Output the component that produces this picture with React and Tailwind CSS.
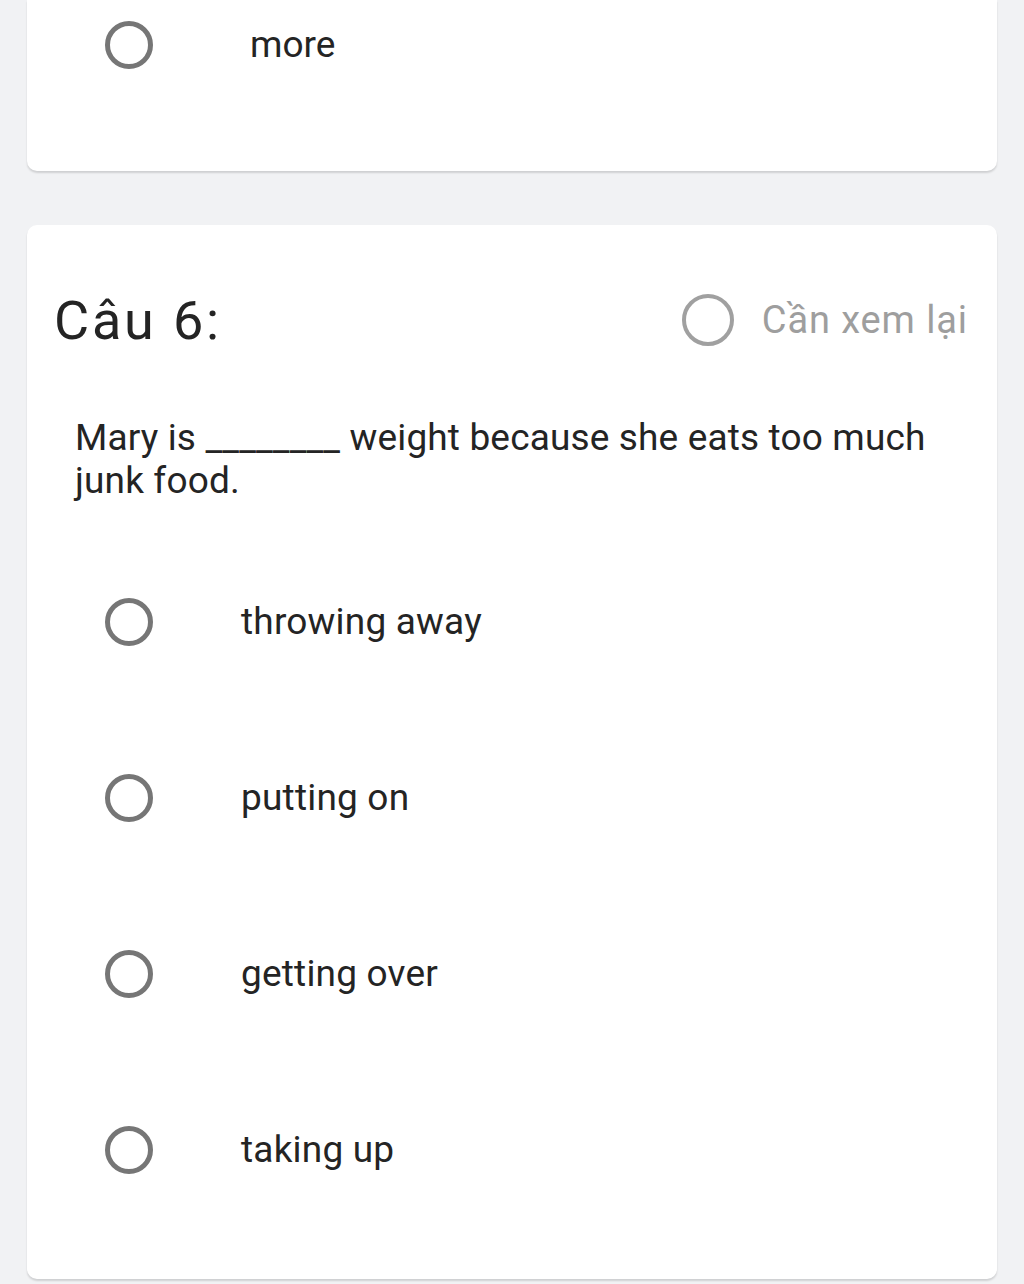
import React from "react";

function Radio({ className = "" }) {
  return (
    <div
      className={`shrink-0 rounded-full border-[5px] border-[#767676] w-[48px] h-[48px] ${className}`}
    />
  );
}

function Option({ label }) {
  return (
    <div className="flex items-center h-[176px] pl-[78px]">
      <Radio />
      <span className="ml-[88px] text-[37px] tracking-[0.2px] text-[#242424]">{label}</span>
    </div>
  );
}

export default function App() {
  return (
    <div
      className="min-h-[1284px] bg-[#f1f2f4] pb-[5px]"
      style={{ fontFamily: "Roboto, 'Noto Sans', sans-serif" }}
    >
      <div className="mx-[27px] h-[171px] bg-white rounded-b-[10px] shadow-[0_2px_2px_rgba(0,0,0,0.14)]">
        <div className="flex items-center h-[90px] pl-[78px]">
          <Radio />
          <span className="ml-[97px] text-[37px] text-[#242424]">more</span>
        </div>
      </div>

      <div className="mx-[27px] mt-[54px] h-[1054px] bg-white rounded-[10px] shadow-[0_2px_2px_rgba(0,0,0,0.14)] pt-[65px]">
        <div className="flex items-center justify-between h-[60px] pl-[27px] pr-[29px]">
          <span className="text-[54px] tracking-[2.8px] text-[#242424]">Câu 6:</span>
          <div className="flex items-center">
            <div className="w-[52px] h-[52px] rounded-full border-[4px] border-[#a0a0a0]" />
            <span className="ml-[28px] text-[38px] tracking-[0.9px] text-[#9e9e9e]">Cần xem lại</span>
          </div>
        </div>

        <p className="mt-[66px] pl-[48px] pr-[40px] text-[37px] leading-[43px] tracking-[0.15px] text-[#242424]">
          Mary is ________ weight because she eats too much junk food.
        </p>

        <div className="mt-[32px]">
          <Option label="throwing away" />
          <Option label="putting on" />
          <Option label="getting over" />
          <Option label="taking up" />
        </div>
      </div>
    </div>
  );
}
